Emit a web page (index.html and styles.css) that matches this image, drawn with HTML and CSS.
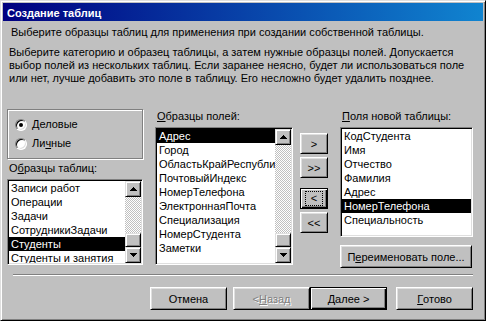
FILE: index.html
```html
<!DOCTYPE html>
<html>
	<head>
	<meta charset="utf-8">
	<link rel="stylesheet" href="styles.css">
	</head>
	<body>
		<div class="window">
			<div class="titlebar">Создание таблиц</div>
			<div class="content">
				<p class="lead">Выберите образцы таблиц для применения при создании собственной таблицы.</p>
				<p class="intro">Выберите категорию и образец таблицы, а затем нужные образцы полей. Допускается<br>выбор полей из нескольких таблиц. Если заранее неясно, будет ли использоваться поле<br>или нет, лучше добавить это поле в таблицу. Его несложно будет удалить позднее.</p>

				<div class="columns">
					<div class="col col-left">
						<div class="group">
							<div class="radio"><span class="radio-box checked"></span><span><u>Д</u>еловые</span></div>
							<div class="radio"><span class="radio-box"></span><span>Ли<u>ч</u>ные</span></div>
						</div>
						<div class="label">О<u>б</u>разцы таблиц:</div>
						<div class="listbox list-tables">
							<div class="items">
								<div class="item">Записи работ</div>
								<div class="item">Операции</div>
								<div class="item">Задачи</div>
								<div class="item">СотрудникиЗадачи</div>
								<div class="item selected">Студенты</div>
								<div class="item">Студенты и занятия</div>
							</div>
							<div class="scrollbar">
								<div class="sb-btn"><svg width="7" height="4"><rect x="3" y="0" width="1" height="1"/><rect x="2" y="1" width="3" height="1"/><rect x="1" y="2" width="5" height="1"/><rect x="0" y="3" width="7" height="1"/></svg></div>
								<div class="sb-track"><div class="sb-thumb"></div></div>
								<div class="sb-btn"><svg width="7" height="4"><rect x="0" y="0" width="7" height="1"/><rect x="1" y="1" width="5" height="1"/><rect x="2" y="2" width="3" height="1"/><rect x="3" y="3" width="1" height="1"/></svg></div>
							</div>
						</div>
					</div>

					<div class="col col-mid">
						<div class="label"><u>О</u>бразцы полей:</div>
						<div class="listbox list-fields">
							<div class="items">
								<div class="item selected">Адрес</div>
								<div class="item">Город</div>
								<div class="item">ОбластьКрайРеспубли</div>
								<div class="item">ПочтовыйИндекс</div>
								<div class="item">НомерТелефона</div>
								<div class="item">ЭлектроннаяПочта</div>
								<div class="item">Специализация</div>
								<div class="item">НомерСтудента</div>
								<div class="item">Заметки</div>
							</div>
							<div class="scrollbar">
								<div class="sb-btn"><svg width="7" height="4"><rect x="3" y="0" width="1" height="1"/><rect x="2" y="1" width="3" height="1"/><rect x="1" y="2" width="5" height="1"/><rect x="0" y="3" width="7" height="1"/></svg></div>
								<div class="sb-track"><div class="sb-thumb"></div></div>
								<div class="sb-btn"><svg width="7" height="4"><rect x="0" y="0" width="7" height="1"/><rect x="1" y="1" width="5" height="1"/><rect x="2" y="2" width="3" height="1"/><rect x="3" y="3" width="1" height="1"/></svg></div>
							</div>
						</div>
					</div>

					<div class="col col-btns">
						<div class="btn move">&gt;</div>
						<div class="btn move">&gt;&gt;</div>
						<div class="btn move focused"><span class="focus-rect">&lt;</span></div>
						<div class="btn move">&lt;&lt;</div>
					</div>

					<div class="col col-right">
						<div class="label"><u>П</u>оля новой таблицы:</div>
						<div class="listbox list-new">
							<div class="items">
								<div class="item">КодСтудента</div>
								<div class="item">Имя</div>
								<div class="item">Отчество</div>
								<div class="item">Фамилия</div>
								<div class="item">Адрес</div>
								<div class="item selected">НомерТелефона</div>
								<div class="item">Специальность</div>
							</div>
						</div>
						<div class="btn rename">П<u>е</u>реименовать поле...</div>
					</div>
				</div>

				<div class="separator"></div>

				<div class="footer">
					<div class="btn wide cancel">Отмена</div>
					<div class="btn wide disabled">&lt; <u>Н</u>азад</div>
					<div class="btn wide focused next"><u>Д</u>алее &gt;</div>
					<div class="btn wide"><u>Г</u>отово</div>
				</div>
			</div>
		</div>
	</body>
</html>
```

FILE: styles.css
```css
* {
	box-sizing: border-box;
}

body {
	margin: 0;
	background-color: #c0c0c0;
	font-family: "Liberation Sans", Arial, sans-serif;
	font-size: 11px;
	color: #000;
}

.window {
	width: 486px;
	height: 321px;
	padding: 2px;
	background-color: #c0c0c0;
	border: 1px solid;
	border-color: #dfdfdf #000 #000 #dfdfdf;
	box-shadow: inset 1px 1px #fff, inset -1px -1px #808080;
}

.titlebar {
	height: 18px;
	padding: 4px 0 0 4px;
	line-height: 13px;
	font-weight: bold;
	color: #fff;
	background: linear-gradient(to right, #000080, #1084d0);
	white-space: nowrap;
}

.content {
	padding: 0 10px 0 4px;
}

.lead {
	margin: 5px 0 0 4px;
	line-height: 13px;
	white-space: nowrap;
}

.intro {
	margin: 7px 0 0 2px;
	line-height: 13px;
	white-space: nowrap;
}

u {
	text-decoration: underline;
	text-underline-offset: 1px;
}

.columns {
	display: flex;
	margin-top: 24px;
	height: 159px;
}

.col {
	display: flex;
	flex-direction: column;
}

.col-left {
	width: 136px;
}

.col-mid {
	width: 138px;
	margin-left: 12px;
}

.col-btns {
	width: 28px;
	margin-left: 7px;
	padding-top: 24px;
}

.col-right {
	width: 133px;
	margin-left: 12px;
}

.label {
	line-height: 13px;
	margin-top: 1px;
	padding-left: 2px;
	white-space: nowrap;
}

.col-left .label {
	margin-top: 3px;
}

/* radio group */
.group {
	height: 50px;
	padding: 8px 0 0 7px;
	border: 1px solid #808080;
	box-shadow: inset 1px 1px #fff, 1px 1px #fff;
}

.radio {
	display: flex;
	align-items: center;
	height: 13px;
	line-height: 13px;
	gap: 5px;
}

.radio + .radio {
	margin-top: 6px;
}

.radio-box {
	width: 12px;
	height: 12px;
	border-radius: 50%;
	background-color: #fff;
	border: 1px solid;
	border-color: #808080 #fff #fff #808080;
	box-shadow: inset 1px 1px #000, inset -1px -1px #dfdfdf;
	display: flex;
	align-items: center;
	justify-content: center;
}

.radio-box.checked::after {
	content: "";
	width: 4px;
	height: 4px;
	border-radius: 50%;
	background-color: #000;
}

/* list boxes */
.listbox {
	display: flex;
	margin-top: 4px;
	padding: 1px;
	background-color: #fff;
	border: 1px solid;
	border-color: #808080 #fff #fff #808080;
	box-shadow: inset 1px 1px #000, inset -1px -1px #dfdfdf;
	overflow: hidden;
}

.list-tables {
	height: 86px;
}

.list-fields {
	height: 138px;
}

.list-new {
	height: 110px;
}

.items {
	flex: 1;
	min-width: 0;
	overflow: hidden;
}

.item {
	height: 14px;
	line-height: 14px;
	padding-left: 2px;
	white-space: nowrap;
	overflow: hidden;
}

.item.selected {
	background-color: #000;
	color: #fff;
}

.scrollbar {
	width: 16px;
	display: flex;
	flex-direction: column;
}

.sb-btn {
	width: 16px;
	height: 16px;
	flex: none;
	display: flex;
	align-items: center;
	justify-content: center;
	background-color: #c0c0c0;
	border: 1px solid;
	border-color: #dfdfdf #000 #000 #dfdfdf;
	box-shadow: inset 1px 1px #fff, inset -1px -1px #808080;
}

.sb-btn svg {
	display: block;
	fill: #000;
}

.sb-track {
	flex: 1;
	display: flex;
	flex-direction: column;
	justify-content: flex-end;
	background-color: #c0c0c0;
	background-image: conic-gradient(#fff 25%, #c0c0c0 0 50%, #fff 0 75%, #c0c0c0 0);
	background-size: 2px 2px;
}

.sb-thumb {
	height: 14px;
	background-color: #c0c0c0;
	border: 1px solid;
	border-color: #dfdfdf #000 #000 #dfdfdf;
	box-shadow: inset 1px 1px #fff, inset -1px -1px #808080;
}

/* buttons */
.btn {
	display: flex;
	align-items: center;
	justify-content: center;
	background-color: #c0c0c0;
	border: 1px solid;
	border-color: #fff #000 #000 #fff;
	box-shadow: inset 1px 1px #dfdfdf, inset -1px -1px #808080;
	white-space: nowrap;
}

.btn.focused {
	border-color: #000;
	box-shadow: inset 1px 1px #fff, inset -1px -1px #000, inset -2px -2px #808080;
}

.move {
	height: 21px;
}

.move + .move {
	margin-top: 3px;
}

.move.focused {
	margin-top: 10px;
}

.move.focused + .move {
	margin-top: 3px;
}

.focus-rect {
	border: 1px dotted #000;
	padding: 0 5px;
	line-height: 13px;
}

.rename {
	width: 132px;
	height: 23px;
	margin-top: 8px;
}

.separator {
	height: 2px;
	margin: 6px 0 0 6px;
	border-top: 1px solid #808080;
	border-bottom: 1px solid #fff;
}

.footer {
	display: flex;
	justify-content: flex-end;
	margin-top: 11px;
}

.wide {
	width: 77px;
	height: 23px;
}

.cancel {
	margin-right: 6px;
}

.next {
	margin-right: 9px;
}

.disabled {
	color: #808080;
	text-shadow: 1px 1px #fff;
}
```
